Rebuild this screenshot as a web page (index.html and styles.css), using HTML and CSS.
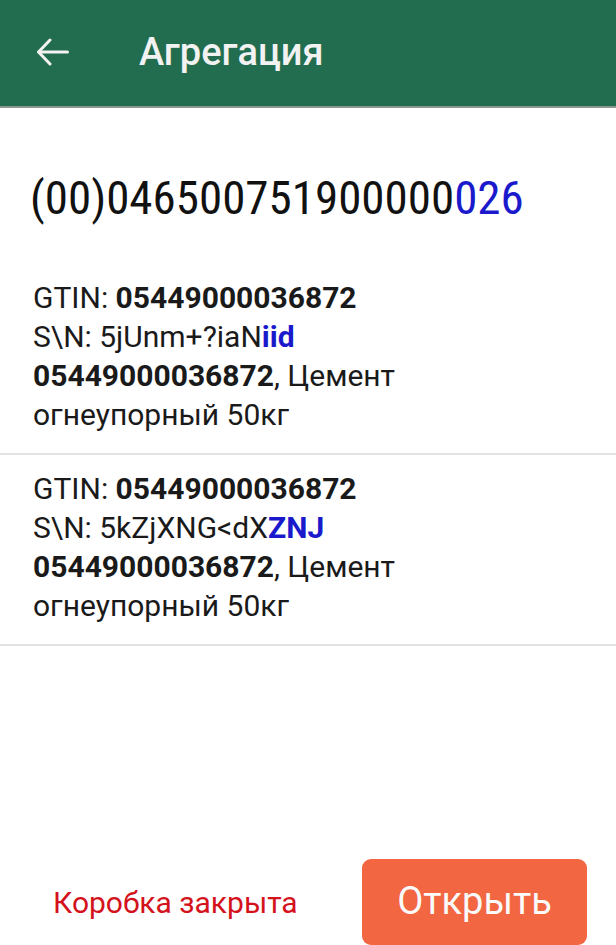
FILE: index.html
```html
<!DOCTYPE html>
<html>

	<head>
		<meta charset="UTF-8">
		<title>Агрегация</title>
		<link rel="stylesheet" href="styles.css">
	</head>

	<body>
		<div class="screen">
			<div class="top-bar">
				<svg class="back" width="32" height="28" viewBox="0 0 32 28">
					<polyline points="13,2 1.5,14 13,26" fill="none" stroke="#f2f2f2" stroke-width="3" stroke-linecap="round" stroke-linejoin="round" />
					<line x1="2" y1="14" x2="30.5" y2="14" stroke="#f2f2f2" stroke-width="3" stroke-linecap="round" />
				</svg>
				<h3 class="title">Агрегация</h3>
			</div>

			<div class="code">(00)046500751900000<span class="blue">026</span></div>

			<div class="list">
				<div class="item">
					<div class="row">GTIN: <b>05449000036872</b></div>
					<div class="row">S\N: 5jUnm+?iaN<b class="blue">iid</b></div>
					<div class="row"><b>05449000036872</b>, Цемент</div>
					<div class="row">огнеупорный 50кг</div>
				</div>
				<div class="item">
					<div class="row">GTIN: <b>05449000036872</b></div>
					<div class="row">S\N: 5kZjXNG&lt;dX<b class="blue">ZNJ</b></div>
					<div class="row"><b>05449000036872</b>, Цемент</div>
					<div class="row">огнеупорный 50кг</div>
				</div>
			</div>

			<div class="bottom">
				<span class="status">Коробка закрыта</span>
				<input class="btn" type="button" value="Открыть" />
			</div>
		</div>
	</body>

</html>
```

FILE: styles.css
```css
* {
	box-sizing: border-box;
}

body {
	margin: 0;
	font-family: Roboto, "Noto Sans", "Noto Sans CJK SC", sans-serif;
	background-color: #fff;
	color: #1a1a1a;
}

.screen {
	width: 616px;
	height: 945px;
	display: flex;
	flex-direction: column;
	overflow: hidden;
}

.top-bar {
	height: 108px;
	background-color: #226d4f;
	border-bottom: 2px solid #8a9890;
	display: flex;
	align-items: center;
	padding-left: 37px;
	padding-bottom: 2px;
	flex-shrink: 0;
}

.back {
	display: block;
}

h3 {
	margin: 0;
	padding: 0;
}

.title {
	font-size: 38px;
	font-weight: 500;
	color: #f2f2f2;
	margin-left: 70px;
}

.code {
	font-size: 47px;
	font-stretch: 85%;
	color: #111;
	padding-left: 30px;
	margin-top: 62px;
	line-height: 56px;
}

.blue {
	color: #1a1acc;
}

.list {
	margin-top: 38px;
}

.item {
	padding: 14px 0 19px 33px;
	border-bottom: 2px solid #e2e2e2;
}

.row {
	font-size: 30px;
	line-height: 39px;
}

.row b {
	font-weight: 700;
}

.bottom {
	margin-top: auto;
	display: flex;
	align-items: center;
	justify-content: space-between;
	padding-left: 53px;
	padding-right: 29px;
}

.status {
	font-size: 30px;
	color: #d4121c;
}

.btn {
	width: 225px;
	height: 86px;
	background-color: #f26641;
	border: none;
	outline: none;
	border-radius: 9px;
	color: #fafafa;
	font-family: Roboto, sans-serif;
	font-size: 38px;
	padding: 0 0 2px 0;
}
```
